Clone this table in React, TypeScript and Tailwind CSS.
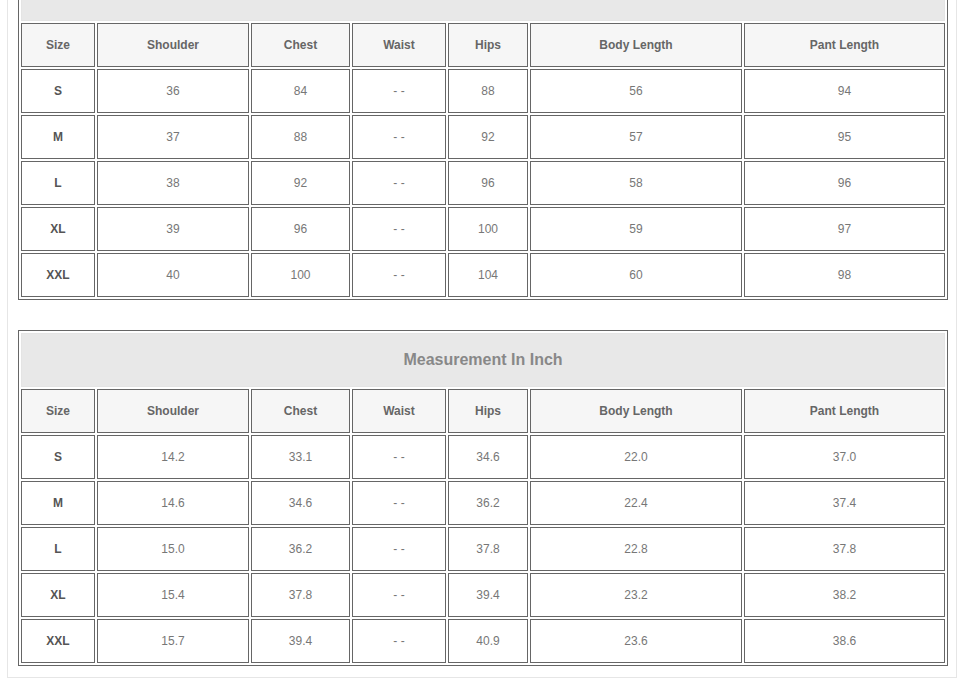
import React from 'react';

const cols = [
    {label: 'Size', w: 'w-[74px]'},
    {label: 'Shoulder', w: 'w-[152px]'},
    {label: 'Chest', w: 'w-[99px]'},
    {label: 'Waist', w: 'w-[94px]'},
    {label: 'Hips', w: 'w-[80px]'},
    {label: 'Body Length', w: 'w-[212px]'},
    {label: 'Pant Length', w: 'w-[201px]'},
];

const cmRows = [
    ['S', '36', '84', '- -', '88', '56', '94'],
    ['M', '37', '88', '- -', '92', '57', '95'],
    ['L', '38', '92', '- -', '96', '58', '96'],
    ['XL', '39', '96', '- -', '100', '59', '97'],
    ['XXL', '40', '100', '- -', '104', '60', '98'],
];

const inchRows = [
    ['S', '14.2', '33.1', '- -', '34.6', '22.0', '37.0'],
    ['M', '14.6', '34.6', '- -', '36.2', '22.4', '37.4'],
    ['L', '15.0', '36.2', '- -', '37.8', '22.8', '37.8'],
    ['XL', '15.4', '37.8', '- -', '39.4', '23.2', '38.2'],
    ['XXL', '15.7', '39.4', '- -', '40.9', '23.6', '38.6'],
];

// title band is scrolled out of view for the first table, so title is optional
function SizeTable({title, rows}: {title?: string; rows: string[][]}) {
    return (
        <table className="w-[930px] border border-[#666] border-separate border-spacing-[2px] text-[12px] text-[#666]">
            <tbody>
                <tr>
                    <th colSpan={7} className="h-[54px] p-0 border border-[#e4e4e4] bg-[#e8e8e8] text-[16px] font-bold text-[#888] text-center">
                        {title}
                    </th>
                </tr>
                <tr>
                    {cols.map(c => (
                        <th key={c.label} className={`${c.w} h-[44px] p-0 border border-[#666] bg-[#f6f6f6] font-bold text-center`}>
                            {c.label}
                        </th>
                    ))}
                </tr>
                {rows.map(r => (
                    <tr key={r[0]}>
                        {r.map((v, i) => (
                            <td key={i} className={`h-[44px] p-0 border border-[#666] bg-white text-center ${i === 0 ? 'font-bold text-[#555]' : 'text-[#777]'}`}>
                                {v}
                            </td>
                        ))}
                    </tr>
                ))}
            </tbody>
        </table>
    );
}

export default function App() {
    return (
        <div className="h-[681px] overflow-hidden bg-white" style={{fontFamily: '"Liberation Sans", Arial, sans-serif'}}>
            <div className="-mt-[47px] ml-[7px] w-[950px] border border-[#e6e6e6] pl-[10px] pt-[10px] pb-[11px]">
                <SizeTable rows={cmRows}/>
                <div className="mt-[30px]">
                    <SizeTable title="Measurement In Inch" rows={inchRows}/>
                </div>
            </div>
        </div>
    );
}
